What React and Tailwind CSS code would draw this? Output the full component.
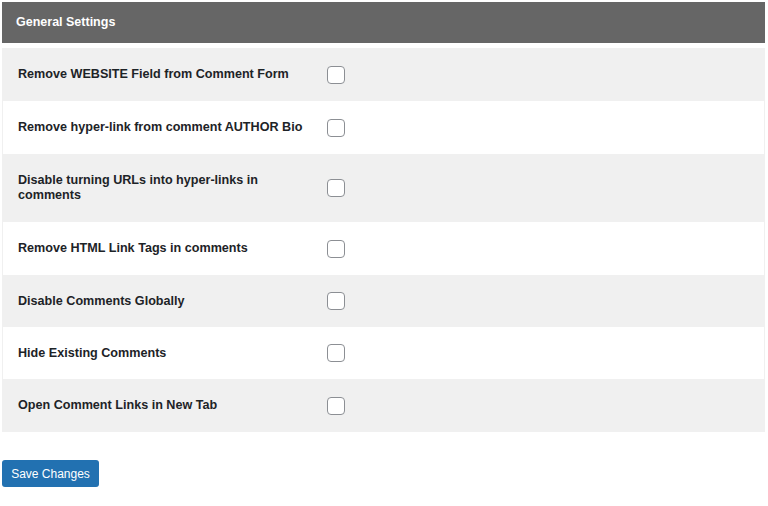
export default function App() {
  const rows = [
    ["Remove WEBSITE Field from Comment Form", "h-[53px]"],
    ["Remove hyper-link from comment AUTHOR Bio", "h-[53px]"],
    ["Disable turning URLs into hyper-links in comments", "h-[68px]"],
    ["Remove HTML Link Tags in comments", "h-[53px]"],
    ["Disable Comments Globally", "h-[52px]"],
    ["Hide Existing Comments", "h-[52px]"],
    ["Open Comment Links in New Tab", "h-[53px]"],
  ];
  return (
    <div className="bg-white min-h-[506px] pt-[2px] pl-[2px]" style={{ fontFamily: '"Liberation Sans", Arial, sans-serif' }}>
      <div className="w-[763px]">
        <div className="h-[41px] bg-[#666666] flex items-center pl-[14px]">
          <span className="text-white text-[12.5px] font-bold">General Settings</span>
        </div>
        <div className="mt-[5px] border-x border-[#f0f0f0]">
          {rows.map(([r, h], i) => (
            <div key={i} className={`flex items-center ${h} ${i % 2 === 0 ? "bg-[#f0f0f0]" : "bg-white"}`}>
              <div className="w-[292px] ml-[15px] text-[12.6px] leading-[15px] font-bold text-[#1d2327]">{r}</div>
              <div className="ml-[17px] w-[18px] h-[18px] rounded-[4px] border border-[#8c8f94] bg-white"></div>
            </div>
          ))}
        </div>
        <button className="mt-[28px] h-[27px] w-[97px] rounded-[3px] bg-[#2271b1] text-white text-[12px] flex items-center justify-center">
          Save Changes
        </button>
      </div>
    </div>
  );
}
